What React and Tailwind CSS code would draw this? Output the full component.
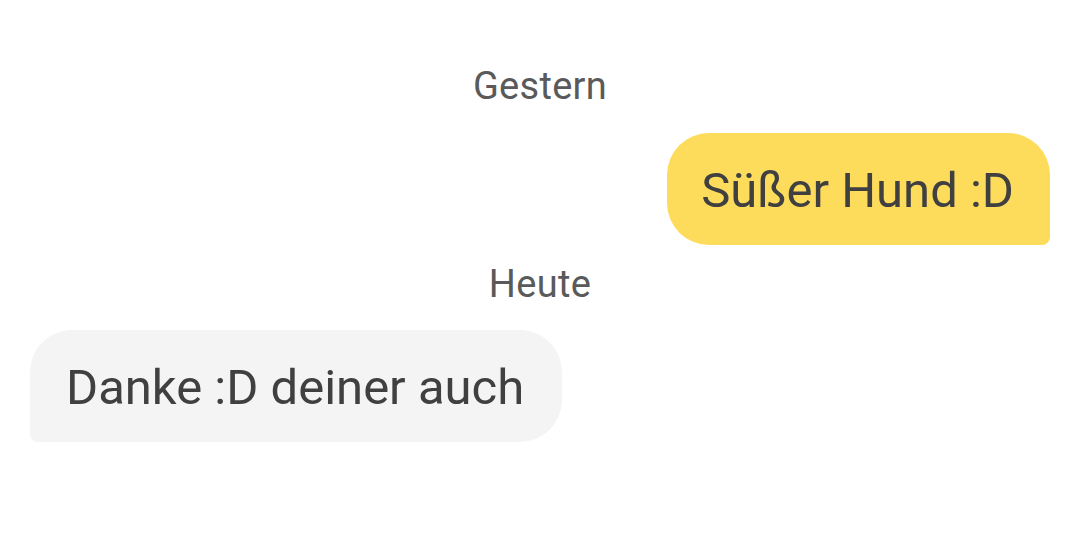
const Label = ({ children, className = '' }) => (
  <div className={`text-center text-[38px] leading-[40px] tracking-[0.3px] text-[#5a5a5a] ${className}`}>{children}</div>
);

const Bubble = ({ mine, children }) => {
  const shape = mine
    ? 'self-end bg-[#fddc5c] rounded-[42px] rounded-br-[8px] pl-[34px] pr-9'
    : 'self-start bg-[#f4f4f4] rounded-[42px] rounded-bl-[8px] pl-9 pr-[38px]';
  return (
    <div className={`${shape} h-[112px] pt-[4px] flex items-center text-[49px] text-[#404040]`}>
      {children}
    </div>
  );
};

export default function App() {
  return (
    <div
      className="w-[1080px] h-[542px] bg-white flex flex-col px-[30px] pt-[66px]"
      style={{ fontFamily: 'Roboto, "Noto Sans", sans-serif' }}>
      <Label>Gestern</Label>
      <div className="mt-[27px] flex flex-col">
        <Bubble mine>Süßer Hund :D</Bubble>
      </div>
      <Label className="mt-[19px]">Heute</Label>
      <div className="mt-[26px] flex flex-col">
        <Bubble>Danke :D deiner auch</Bubble>
      </div>
    </div>
  );
}
